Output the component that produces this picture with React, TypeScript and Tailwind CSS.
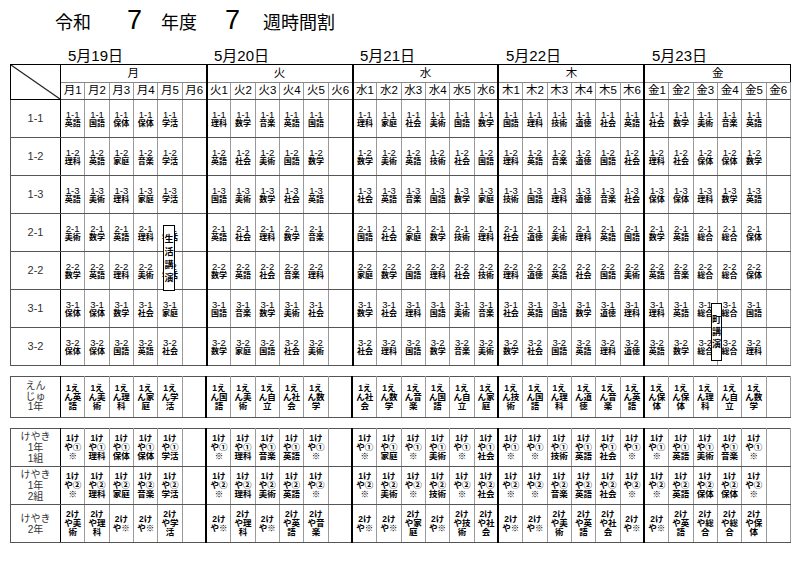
import clsx from "clsx";

const days = ["月", "火", "水", "木", "金"];
const dates = ["5月19日", "5月20日", "5月21日", "5月22日", "5月23日"];

// one string per day, "-" = empty period
const classes: [string, string[]][] = [
  ["1-1", ["英語 国語 保体 保体 学活 -", "理科 数学 音楽 英語 国語 -", "理科 家庭 社会 美術 国語 数学", "国語 理科 技術 道徳 社会 英語", "社会 数学 美術 音楽 英語 -"]],
  ["1-2", ["理科 英語 家庭 音楽 学活 -", "英語 社会 美術 国語 数学 -", "数学 美術 英語 技術 社会 国語", "理科 英語 音楽 道徳 国語 社会", "理科 社会 保体 保体 数学 -"]],
  ["1-3", ["英語 美術 理科 家庭 学活 -", "国語 美術 数学 社会 英語 -", "社会 英語 音楽 国語 数学 家庭", "技術 国語 理科 道徳 音楽 社会", "保体 保体 理科 数学 英語 -"]],
  ["2-1", ["美術 数学 英語 理科 学活 -", "英語 社会 理科 数学 音楽 -", "国語 社会 家庭 数学 技術 理科", "社会 道徳 美術 理科 英語 国語", "数学 英語 総合 総合 保体 -"]],
  ["2-2", ["数学 英語 理科 美術 学活 -", "数学 英語 社会 音楽 理科 -", "家庭 数学 国語 理科 社会 技術", "理科 道徳 英語 社会 国語 美術", "英語 音楽 総合 総合 保体 -"]],
  ["3-1", ["保体 保体 数学 社会 家庭 -", "国語 音楽 数学 美術 社会 -", "数学 社会 理科 国語 美術 音楽", "社会 英語 国語 数学 道徳 理科", "理科 英語 総合 総合 国語 -"]],
  ["3-2", ["保体 保体 国語 英語 社会 -", "数学 家庭 国語 社会 美術 -", "社会 理科 国語 数学 音楽 美術", "数学 社会 国語 英語 理科 道徳", "英語 数学 総合 総合 理科 -"]],
];

const enju = ["英語 美術 理科 家庭 学活 -", "国語 美術 自立 社会 数学 -", "社会 数学 音楽 国語 自立 家庭", "技術 国語 理科 道徳 音楽 英語", "保体 保体 理科 自立 数学 -"];

const keyaki: [string[], string, string[]][] = [
  [["けやき", "1年", "1組"], "1けや①", ["※ 理科 保体 保体 学活 -", "※ 理科 音楽 英語 ※ -", "※ 家庭 ※ 美術 ※ 社会", "※ ※ 技術 英語 社会 ※", "※ 英語 美術 音楽 ※ -"]],
  [["けやき", "1年", "2組"], "1けや②", ["※ 理科 家庭 音楽 学活 -", "※ 理科 美術 英語 ※ -", "※ 美術 ※ 技術 ※ 社会", "※ ※ 音楽 英語 社会 ※", "※ 英語 保体 保体 ※ -"]],
  [["けやき", "2年"], "2けや", ["美術 理科 ※ ※ 学活 -", "※ 理科 ※ 英語 音楽 -", "※ ※ 家庭 ※ 技術 社会", "※ ※ 美術 英語 社会 ※", "※ 英語 総合 総合 保体 -"]],
];

const parse = (w: string[]) => w.join(" ").split(" ").map((s) => (s === "-" ? "" : s));

const chunk2 = (s: string) => {
  const a = Array.from(s);
  const out: string[] = [];
  for (let i = 0; i < a.length; i += 2) out.push(a.slice(i, i + 2).join(""));
  return out;
};

const cellCls = (i: number) =>
  clsx(
    "border-x border-x-[#9a9a9a] border-y border-y-[#555] p-0 text-center align-middle",
    i % 6 === 0 && i > 0 && "border-l-2 border-l-black"
  );

const headCls = "border border-[#555] border-r-black p-0 text-center align-middle text-[#333]";

function Cols() {
  return (
    <colgroup>
      <col className="w-[50px]" />
      {Array.from({ length: 30 }).map((_, i) => (
        <col key={i} className="w-[24.33px]" />
      ))}
    </colgroup>
  );
}

function Lines({ lines, small }: { lines: string[]; small?: boolean }) {
  return (
    <>
      {lines.map((l, i) => (
        <div
          key={i}
          className={clsx(
            "whitespace-nowrap",
            small ? "text-[8.5px] leading-[9px] font-semibold" : i === 0 ? "text-[9.5px] leading-[9px]" : "text-[8px] leading-[9px] font-semibold"
          )}
        >
          {l}
        </div>
      ))}
    </>
  );
}

export default function App() {
  return (
    <div className="relative w-[800px] h-[572px] bg-white text-black font-['Liberation_Sans','Noto_Sans_CJK_JP',sans-serif]">
      <div className="flex items-baseline h-[38px] pt-[7px] pl-[55px]">
        <span className="text-[18px]">令和</span>
        <span className="text-[27px] leading-none ml-[36px]">7</span>
        <span className="text-[18px] ml-[19px]">年度</span>
        <span className="text-[27px] leading-none ml-[28px]">7</span>
        <span className="text-[18px] ml-[23px]">週時間割</span>
      </div>

      <div className="flex items-end h-[26px] pl-[60px] pb-[1px]">
        {dates.map((d) => (
          <div key={d} className="w-[146px] pl-[8px] text-[15px] leading-none">
            {d}
          </div>
        ))}
      </div>

      <table className="ml-[10px] table-fixed border-collapse border border-black w-[780px]">
        <Cols />
        <tbody>
          <tr className="h-[18px]">
            <td rowSpan={2} className="relative border border-black p-0">
              <svg className="absolute inset-0 w-full h-full" viewBox="0 0 100 100" preserveAspectRatio="none">
                <line x1="0" y1="0" x2="100" y2="100" stroke="#222" strokeWidth="1.2" vectorEffect="non-scaling-stroke" />
              </svg>
            </td>
            {days.map((d, i) => (
              <td
                key={d}
                colSpan={6}
                className={clsx("border-b border-b-[#888] border-t border-t-black p-0 text-center text-[11.5px] leading-none", i > 0 && "border-l-2 border-l-black")}
              >
                {d}
              </td>
            ))}
          </tr>
          <tr className="h-[17px]">
            {Array.from({ length: 30 }).map((_, i) => (
              <td key={i} className={clsx(cellCls(i), "text-[11.5px] leading-none whitespace-nowrap")}>
                {days[Math.floor(i / 6)]}
                {(i % 6) + 1}
              </td>
            ))}
          </tr>
          {classes.map(([cls, w]) => (
            <tr key={cls} className="h-[38px]">
              <td className={clsx(headCls, "text-[11px]")}>{cls}</td>
              {parse(w).map((s, i) => (
                <td key={i} className={cellCls(i)}>
                  {s && <Lines lines={[cls, s]} />}
                </td>
              ))}
            </tr>
          ))}
        </tbody>
      </table>

      <table className="mt-[10px] ml-[10px] table-fixed border-collapse border border-black w-[780px]">
        <Cols />
        <tbody>
          <tr className="h-[41px]">
            <td className={clsx(headCls, "text-[10px] leading-[10.5px]")}>
              <div>えん</div>
              <div>じゅ</div>
              <div>1年</div>
            </td>
            {parse(enju).map((s, i) => (
              <td key={i} className={cellCls(i)}>
                {s && <Lines small lines={chunk2("1えん" + s)} />}
              </td>
            ))}
          </tr>
        </tbody>
      </table>

      <table className="mt-[10px] ml-[10px] table-fixed border-collapse border border-black border-b-[#777] w-[780px]">
        <Cols />
        <tbody>
          {keyaki.map(([head, pre, w]) => (
            <tr key={head.join("")} className="h-[38px]">
              <td className={clsx(headCls, "text-[10px] leading-[11px]")}>
                {head.map((h) => (
                  <div key={h}>{h}</div>
                ))}
              </td>
              {parse(w).map((s, i) => (
                <td key={i} className={cellCls(i)}>
                  {s && <Lines small lines={chunk2(pre + s)} />}
                </td>
              ))}
            </tr>
          ))}
        </tbody>
      </table>

      {/* overlaid event boxes */}
      <div className="absolute left-[163px] top-[225px] w-[12px] h-[66px] border border-black bg-white flex flex-col items-center justify-center gap-[3px] text-[9px] leading-[10px] font-semibold">
        <span>生</span>
        <span>活</span>
        <span>講</span>
        <span>演</span>
      </div>
      <div className="absolute left-[711px] top-[303px] w-[11px] h-[58px] border border-black bg-white flex flex-col items-center justify-center gap-[2px] text-[9px] leading-[10px] font-semibold">
        <span>町</span>
        <span>講</span>
        <span>演</span>
      </div>
    </div>
  );
}
